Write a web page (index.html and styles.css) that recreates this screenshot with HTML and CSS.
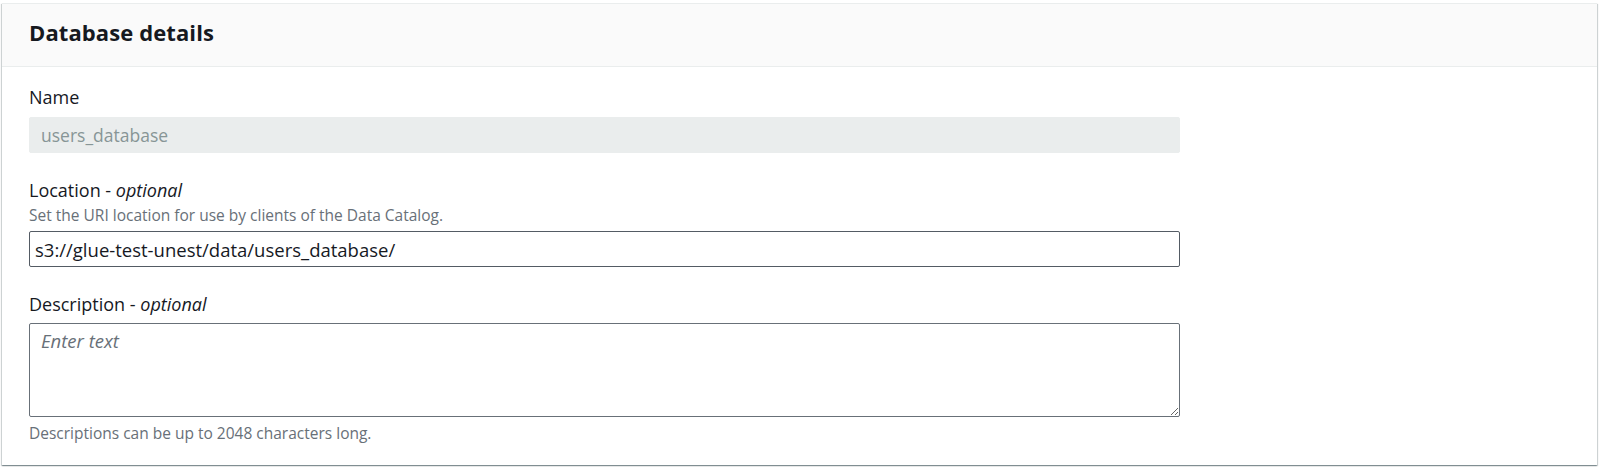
FILE: index.html
```html
<!DOCTYPE html>
<html lang="en">
<head>
<meta charset="utf-8">
<title>Database details</title>
<link rel="stylesheet" href="styles.css">
</head>
<body>
<div class="container">
  <div class="container-header">
    <h2 class="title">Database details</h2>
  </div>
  <div class="container-content">
    <div class="field">
      <label class="label" for="name">Name</label>
      <input class="control control-disabled" id="name" type="text" value="users_database" disabled>
    </div>
    <div class="field">
      <label class="label" for="loc">Location - <i>optional</i></label>
      <div class="hint">Set the URI location for use by clients of the Data Catalog.</div>
      <input class="control control-loc" id="loc" type="text" value="s3://glue-test-unest/data/users_database/">
    </div>
    <div class="field">
      <label class="label" for="desc">Description - <i>optional</i></label>
      <textarea class="control control-area" id="desc" placeholder="Enter text"></textarea>
      <div class="constraint">Descriptions can be up to 2048 characters long.</div>
    </div>
  </div>
</div>
</body>
</html>
```

FILE: styles.css
```css
* { box-sizing: border-box; }
html, body { margin: 0; padding: 0; background: #ffffff; }
body {
  font-family: "Open Sans", "Liberation Sans", sans-serif;
  color: #16191f;
  padding: 3px 3px 3px 2px;
}
.container {
  background: #ffffff;
  border-top: 1px solid #eaeded;
  box-shadow: 0 1px 1px 0 rgba(0, 28, 36, 0.3), 1px 1px 1px 0 rgba(0, 28, 36, 0.15), -1px 1px 1px 0 rgba(0, 28, 36, 0.15);
  height: 462px;
}
.container-header {
  background: #fafafa;
  border-bottom: 1px solid #eaeded;
  height: 63px;
  display: flex;
  align-items: center;
  padding: 0 27px 6px 27px;
}
.title {
  margin: 0;
  font-size: 22px;
  font-weight: 700;
  line-height: 30px;
  letter-spacing: 0.1px;
}
.container-content {
  padding: 18px 27px 19px 27px;
  display: flex;
  flex-direction: column;
  gap: 25px;
}
.field {
  display: flex;
  flex-direction: column;
  width: 1151px;
}
.label {
  font-size: 18px;
  line-height: 24px;
  color: #16191f;
}
.hint {
  font-size: 15.5px;
  line-height: 20px;
  color: #687078;
  margin-top: 3px;
}
.control {
  font-family: "Open Sans", "Liberation Sans", sans-serif;
  font-size: 17.5px;
  color: #16191f;
  border: 1px solid #545b64;
  border-radius: 2px;
  background: #ffffff;
  height: 36px;
  padding: 0 11px;
  margin-top: 8px;
  outline: none;
}
.control-disabled {
  background: #eaeded;
  border-color: #eaeded;
  color: #879596;
}
.control-loc {
  font-size: 18.5px;
  padding-left: 5px;
  margin-top: 6px;
}
.control-area {
  height: 94px;
  padding: 5px 11px;
  resize: vertical;
  line-height: 24px;
  margin-top: 7px;
  border-color: #687078;
}
.control-area::placeholder {
  color: #687078;
  font-style: italic;
  font-size: 18.5px;
}
.constraint {
  font-size: 15.5px;
  line-height: 20px;
  color: #687078;
  margin-top: 6px;
}
```
